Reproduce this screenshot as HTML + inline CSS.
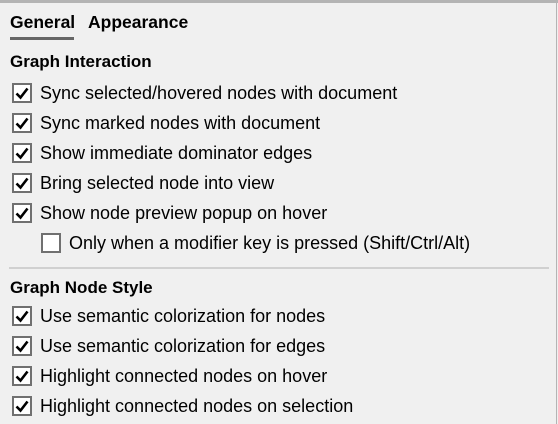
<!DOCTYPE html>
<html><head><style>
body{margin:0;width:558px;height:424px;background:#f0f0f0;font-family:"Liberation Sans",sans-serif;color:#000;position:relative;overflow:hidden}
.top{position:absolute;left:0;top:0;width:558px;height:3px;background:#b4b4b4}
.right{position:absolute;right:1px;top:0;width:1px;height:424px;background:#b4b4b4}
.t{position:absolute;white-space:nowrap}
.tab{font-size:17.5px;font-weight:bold;top:12px}
.h{font-size:17px;font-weight:bold;left:10px}
.cb{position:absolute;width:16px;height:16px;border:2px solid #707070;background:#fff}
.lbl{font-size:18px}
</style></head><body>
<div class="top"></div><div class="right"></div>
<div class="t tab" style="left:10px">General</div>
<div class="t tab" style="left:88px">Appearance</div>
<div style="position:absolute;left:10px;top:37px;width:64px;height:3px;background:#666"></div>
<div class="t h" style="top:52px">Graph Interaction</div>
<div style="position:absolute;left:9px;top:267px;width:540px;height:2px;background:#d0d0d0"></div>
<div class="t h" style="top:278px">Graph Node Style</div>
<div id="rows"></div>
<script>
const rows=[[93,12,"Sync selected/hovered nodes with document",1],[123,12,"Sync marked nodes with document",1],[153,12,"Show immediate dominator edges",1],[183,12,"Bring selected node into view",1],[213,12,"Show node preview popup on hover",1],[243,41,"Only when a modifier key is pressed (Shift/Ctrl/Alt)",0],[316,12,"Use semantic colorization for nodes",1],[346,12,"Use semantic colorization for edges",1],[376,12,"Highlight connected nodes on hover",1],[406,12,"Highlight connected nodes on selection",1]];
let h="";
for(const [y,x,t,c] of rows){
h+=`<div class="cb" style="left:${x}px;top:${y-10}px">${c?'<svg width="16" height="16" style="position:absolute;left:0;top:0"><path d="M2.5 8.5 L6.5 12.5 L13.5 3.5" fill="none" stroke="#000" stroke-width="2.6"/></svg>':''}</div>`;
h+=`<div class="t lbl" style="left:${x+28}px;top:${y-10}px">${t}</div>`;
}
document.getElementById("rows").innerHTML=h;
</script>
</body></html>
